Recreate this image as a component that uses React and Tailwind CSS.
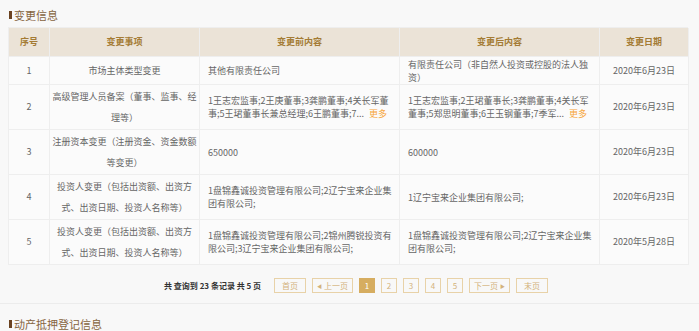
const font = { fontFamily: '"Noto Sans CJK SC", "Noto Sans", sans-serif' };

const rows = [
  {
    no: '1',
    h: 'h-[28px]',
    item: ['市场主体类型变更'],
    before: ['其他有限责任公司'],
    after: ['有限责任公司（非自然人投资或控股的法人独', '资）'],
    date: '2020年6月23日',
  },
  {
    no: '2',
    h: 'h-[45px]',
    item: ['高级管理人员备案（董事、监事、经', '理等）'],
    before: ['1王志宏监事;2王庚董事;3龚鹏董事;4关长军董', '事;5王珺董事长兼总经理;6王鹏董事;7...'],
    after: ['1王志宏监事;2王珺董事长;3龚鹏董事;4关长军', '董事;5郑思明董事;6王玉钢董事;7季军...'],
    more: true,
    date: '2020年6月23日',
  },
  {
    no: '3',
    h: 'h-[45px]',
    item: ['注册资本变更（注册资金、资金数额', '等变更）'],
    before: ['650000'],
    after: ['600000'],
    date: '2020年6月23日',
  },
  {
    no: '4',
    h: 'h-[45px]',
    item: ['投资人变更（包括出资额、出资方', '式、出资日期、投资人名称等）'],
    before: ['1盘锦鑫诚投资管理有限公司;2辽宁宝来企业集', '团有限公司;'],
    after: ['1辽宁宝来企业集团有限公司;'],
    date: '2020年6月23日',
  },
  {
    no: '5',
    h: 'h-[45px]',
    item: ['投资人变更（包括出资额、出资方', '式、出资日期、投资人名称等）'],
    before: ['1盘锦鑫诚投资管理有限公司;2锦州腾锐投资有', '限公司;3辽宁宝来企业集团有限公司;'],
    after: ['1盘锦鑫诚投资管理有限公司;2辽宁宝来企业集', '团有限公司;'],
    date: '2020年5月28日',
  },
];

const cell = 'flex items-center border-r border-b border-[#eeeeee]';

const Lines = ({ lines, more }) => (
  <div className="leading-[13px]">
    {lines.map((l, i) => (
      <div key={i} className="whitespace-nowrap">
        {l}
        {more && i === lines.length - 1 && <span className="ml-[5px] text-[#f7a53a]">更多</span>}
      </div>
    ))}
  </div>
);

const Title = ({ children }) => (
  <div className="flex items-center gap-[2px] pl-[9px]">
    <span className="w-[3px] h-[8px] bg-[#6b4220]" />
    <span className="text-[11px] leading-[12px] text-[#86643f]">{children}</span>
  </div>
);

const PageBtn = ({ children, active, w }) => (
  <span
    className={`flex items-center justify-center h-[15px] ${w} border text-[8px] leading-none ${
      active ? 'bg-[#d6ad60] border-[#d6ad60] text-white' : 'border-[#e8d2a8] text-[#d3b27c]'
    }`}
  >
    {children}
  </span>
);

export default function App() {
  return (
    <div className="w-[699px] h-[331px] overflow-hidden bg-[#f8f8f8] text-[#666666]" style={font}>
      <div className="h-[27px] pt-[9px]">
        <Title>变更信息</Title>
      </div>

      <div className="ml-[8px] w-[680px] border-l border-t border-[#eeeeee] bg-[#fbfbfb] text-[9px]">
        <div className="grid grid-cols-[41px_150px_200px_200px_89px] h-[29px] bg-[#ebe3d7] text-[#a47b34] font-bold">
          <div className={`${cell} justify-center border-[#e2d9ca]`}>序号</div>
          <div className={`${cell} justify-center border-[#e2d9ca]`}>变更事项</div>
          <div className={`${cell} justify-center border-[#e2d9ca]`}>变更前内容</div>
          <div className={`${cell} justify-center border-[#e2d9ca]`}>变更后内容</div>
          <div className={`${cell} justify-center border-[#e2d9ca]`}>变更日期</div>
        </div>
        {rows.map((r) => (
          <div key={r.no} className={`grid grid-cols-[41px_150px_200px_200px_89px] ${r.h}`}>
            <div className={`${cell} justify-center`}>{r.no}</div>
            <div className={`${cell} justify-center text-center leading-[21px]`}>
              <div>
                {r.item.map((l, i) => (
                  <div key={i} className="whitespace-nowrap">{l}</div>
                ))}
              </div>
            </div>
            <div className={`${cell} pl-[8px]`}>
              <Lines lines={r.before} more={r.more} />
            </div>
            <div className={`${cell} pl-[8px]`}>
              <Lines lines={r.after} more={r.more} />
            </div>
            <div className={`${cell} justify-center`}>{r.date}</div>
          </div>
        ))}
      </div>

      <div className="h-[39px] flex items-center gap-[6px] pl-[164px] pt-[3px] border-b border-[#ececec]">
        <span className="mr-[7px] text-[8px] font-bold text-[#333333] whitespace-nowrap">
          共 查询到 23 条记录 共 5 页
        </span>
        <PageBtn w="w-[32px]">首页</PageBtn>
        <PageBtn w="w-[41px]">
          <span className="text-[5px] mr-[2px]">◀</span>上一页
        </PageBtn>
        <PageBtn w="w-[16px]" active>1</PageBtn>
        <PageBtn w="w-[16px]">2</PageBtn>
        <PageBtn w="w-[16px]">3</PageBtn>
        <PageBtn w="w-[16px]">4</PageBtn>
        <PageBtn w="w-[16px]">5</PageBtn>
        <PageBtn w="w-[41px]">
          下一页<span className="text-[5px] ml-[2px]">▶</span>
        </PageBtn>
        <PageBtn w="w-[32px]">末页</PageBtn>
      </div>

      <div className="pt-[14px]">
        <Title>动产抵押登记信息</Title>
      </div>
    </div>
  );
}
